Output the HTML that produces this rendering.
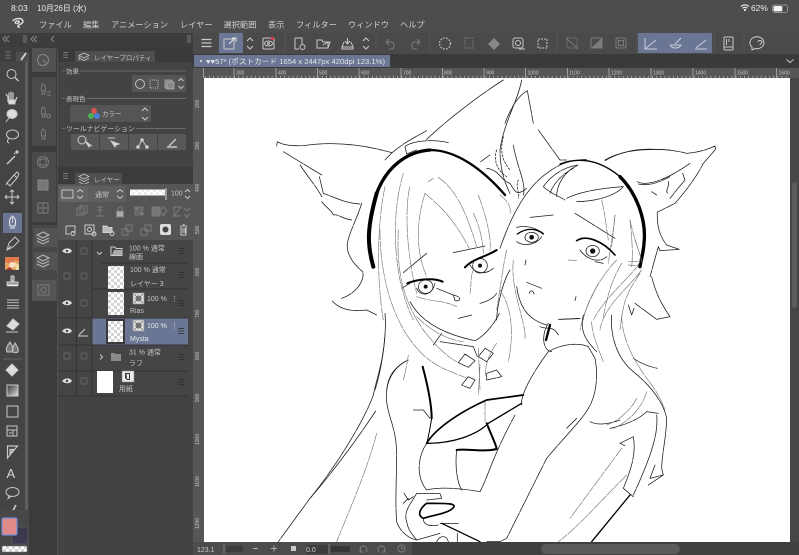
<!DOCTYPE html>
<html lang="ja"><head><meta charset="utf-8"><title>Clip Studio Paint</title>
<style>
html,body{margin:0;padding:0;background:#444;width:799px;height:555px;overflow:hidden}
svg{display:block;filter:blur(.3px)}
text{font-family:"Liberation Sans","Noto Sans CJK JP",sans-serif;fill:#d0d0d0}
.m{font-size:8.2px;fill:#cfcfcf}
.s{font-size:6.5px;fill:#c4c4c4}
.w{font-size:7px;fill:#c4c4c4}
.r{font-size:5px;fill:#c8c8c8}
.i{fill:none;stroke:#c8c8c8;stroke-width:1}
.d{fill:none;stroke:#7c7c7c;stroke-width:1}
.k{fill:none;stroke:#1c1c1c;stroke-width:2.3;stroke-linecap:round;stroke-linejoin:round;stroke-dasharray:70 3 45 2 110 3}
.g{fill:none;stroke:#777;stroke-width:2;stroke-linecap:round;stroke-linejoin:round;stroke-dasharray:30 4 18 3}
.t{fill:none;stroke:#000;stroke-width:7;stroke-linecap:round;stroke-linejoin:round}
</style></head><body>
<svg width="799" height="555" viewBox="0 0 799 555" xmlns="http://www.w3.org/2000/svg">
<defs>
<pattern id="ck" width="6" height="6" patternUnits="userSpaceOnUse"><rect width="6" height="6" fill="#fff"/><rect width="3" height="3" fill="#d4d4d4"/><rect x="3" y="3" width="3" height="3" fill="#d4d4d4"/></pattern>
<pattern id="tk" width="4.18" height="4" patternUnits="userSpaceOnUse"><rect x="0" y="0" width=".8" height="2" fill="#ccc"/></pattern>
<pattern id="tl" width="4" height="4.18" patternUnits="userSpaceOnUse"><rect x="0" y="0" width="2" height=".8" fill="#ccc"/></pattern>
<linearGradient id="gr" x1="0" y1="0" x2="1" y2="1"><stop offset="0" stop-color="#333"/><stop offset="1" stop-color="#ddd"/></linearGradient>
</defs>

<!-- base -->
<rect width="799" height="555" fill="#434343"/>
<rect width="799" height="33" fill="#4d4d4d"/>
<rect y="33" width="193" height="14" fill="#3d3d3d"/>

<!-- status -->
<text x="11" y="11" style="font-size:8.6px;fill:#ececec">8:03</text>
<text x="37" y="11" style="font-size:8px;fill:#ececec">10月26日 (水)</text>
<path d="M741 6.5a6 6 0 0 1 8 0M742.6 8.3a3.5 3.5 0 0 1 4.8 0" fill="none" stroke="#eee" stroke-width="1.1"/><circle cx="745" cy="10" r="1.1" fill="#eee"/>
<text x="751" y="11" style="font-size:8.400px;fill:#ececec">62%</text>
<rect x="772.5" y="5" width="15" height="7.4" rx="2" fill="none" stroke="#aaa" stroke-width=".7"/><rect x="773.5" y="6" width="8.8" height="5.4" rx="1" fill="#f4f4f4"/>

<!-- menu -->
<path d="M13 20.5c3-2.5 8-2.5 9.500-.5 1.500 2.500-1.500 4-3.500 5-1.500.8-1.500 2.200.5 2.200M16 23.500c-1.500-1-.5-2.500 1.500-2.500s2.500 1.500 0 2.500" fill="none" stroke="#ddd" stroke-width="1.500" stroke-linecap="round"/>
<text class="m" x="39" y="27.500">ファイル</text>
<text class="m" x="83" y="27.500">編集</text>
<text class="m" x="111" y="27.500">アニメーション</text>
<text class="m" x="180" y="27.500">レイヤー</text>
<text class="m" x="223.500" y="27.500">選択範囲</text>
<text class="m" x="268" y="27.500">表示</text>
<text class="m" x="296" y="27.500">フィルター</text>
<text class="m" x="348" y="27.500">ウィンドウ</text>
<text class="m" x="400" y="27.500">ヘルプ</text>

<!-- toolbar -->
<rect x="193" y="33" width="606" height="21" fill="#4a4a4a"/>
<rect x="193" y="54" width="606" height="14" fill="#3a3a3a"/>
<rect x="219" y="33" width="24" height="20" fill="#6a7693"/>
<rect x="638" y="33" width="74" height="20" fill="#6a7693"/>
<g class="i">
<path d="M201.500 39.500h10M201.500 43h10M201.500 46.500h10" stroke-width="1.200"/>
<rect x="224" y="39" width="10" height="10"/><path d="M229 44l6-6M232 38h4v4" stroke="#e6e6e6"/>
<path d="M247 41l3-3 3 3M247 46l3 3 3-3"/>
<rect x="263" y="38" width="11" height="11" rx="1"/><ellipse cx="268.500" cy="43.500" rx="4" ry="2.500"/><circle cx="268.500" cy="43.500" r="1"/>
<path d="M295 38h7v6M295 38v11h4"/><circle cx="302.500" cy="47" r="2.500"/>
<path d="M317 40h5l1 2h5v6h-11zM323 45l5-3h2l-2 6"/>
<path d="M342 47h11v2h-11zM347.500 38v6M345 41l2.500 3 2.500-3M344 42l-2 5M351 42l2 5"/>
<path d="M363 41l3-3 3 3M363 46l3 3 3-3"/>
</g>
<circle cx="272.500" cy="38.500" r="1.700" fill="#d23a55"/>
<path d="M285 33v20M376 33v20M430 33v20M557 33v20M637 33v20M714 33v20M744 33v20" stroke="#5a5a5a" stroke-width=".8"/>
<g class="d">
<path d="M386 42h6a4 4 0 0 1 0 7h-3M386 42l3-3M386 42l3 3"/>
<path d="M420 42h-6a4 4 0 0 0 0 7h3M420 42l-3-3M420 42l-3 3"/>
</g>
<circle cx="445" cy="43.500" r="5.500" fill="none" stroke="#c4c4c4" stroke-width="1.300" stroke-dasharray="1.500 1.500"/>
<rect x="465" y="38" width="8" height="10" fill="none" stroke="#7c7c7c" stroke-dasharray="1.500 1"/>
<path d="M488 44l6-6 6 6-6 6z" fill="#888"/>
<rect x="513" y="38" width="10" height="10" rx="2" fill="none" stroke="#c4c4c4"/><circle cx="518" cy="43" r="2.500" fill="none" stroke="#c4c4c4"/><path d="M519 49h6" stroke="#c4c4c4"/>
<rect x="538" y="39" width="9" height="9" fill="none" stroke="#c4c4c4" stroke-dasharray="2 1"/>
<g class="d" stroke="#6e6e6e">
<rect x="567" y="38" width="10" height="10" stroke-dasharray="1.500 1"/><path d="M566 38l12 11"/>
<rect x="591" y="38" width="11" height="10"/>
<rect x="616" y="38" width="10" height="10" rx="1.500"/><rect x="618.500" y="40.500" width="5" height="5"/>
</g>
<path d="M591 48l11-10v10z" fill="#7c7c7c"/>
<g fill="none" stroke="#c9cfdd" stroke-width="1">
<path d="M645 38v11h12M645 49l11-9"/>
<path d="M670 45h11a6 5 0 0 1-11 0M675 44l6-6"/>
<path d="M695 49h12M696 48l10-8"/>
</g>
<g class="i">
<rect x="724" y="37" width="9" height="13" rx="1"/><path d="M724 47h9M726.500 39v6M729 39v3"/>
<path d="M752 47a7 6 0 1 1 3 1.500l-3 1.500zM758 42c0-2 4-2 4 0 0 1.500-2 1.500-2 3"/>
</g>

<!-- doc tab -->
<rect x="194" y="55" width="196" height="12" fill="#6a7693"/>
<circle cx="201" cy="61" r="1.200" fill="#ccc"/>
<text x="206" y="64" textLength="179" lengthAdjust="spacingAndGlyphs" style="font-size:7.400px;fill:#e4e4e4">♥♥57* (ポストカード 1654 x 2447px 420dpi 123.1%)</text>
<path d="M786.500 59.500l3.500 3 3.500-3" fill="none" stroke="#ccc"/>

<!-- rulers -->
<rect x="193" y="68" width="606" height="10" fill="#565656"/>
<rect x="193" y="68" width="11" height="474" fill="#565656"/>
<rect x="204" y="75.500" width="586" height="2" fill="url(#tk)"/>
<rect x="202" y="78" width="2" height="464" fill="url(#tl)"/>
<path d="M203.500 68v10M234 68v10M276 68v10M317.500 68v10M359 68v10M401 68v10M442.500 68v10M484 68v10M525.500 68v10M567.500 68v10M609 68v10M651 68v10M693 68v10M735 68v10M776.500 68v10" stroke="#d0d0d0" stroke-width=".6"/>
<g class="r">
<text class="r" x="236" y="74.500">300</text><text class="r" x="278" y="74.500">400</text><text class="r" x="319" y="74.500">500</text><text class="r" x="361" y="74.500">600</text><text class="r" x="403" y="74.500">700</text><text class="r" x="444" y="74.500">800</text><text class="r" x="486" y="74.500">900</text><text class="r" x="527.500" y="74.500">1000</text><text class="r" x="569" y="74.500">1100</text><text class="r" x="611" y="74.500">1200</text><text class="r" x="653" y="74.500">1300</text><text class="r" x="695" y="74.500">1400</text><text class="r" x="737" y="74.500">1500</text><text class="r" x="778.500" y="74.500">1600</text>
</g>
<g>
<text class="r" transform="translate(199,108) rotate(-90)">200</text><text class="r" transform="translate(199,150) rotate(-90)">300</text><text class="r" transform="translate(199,192) rotate(-90)">400</text><text class="r" transform="translate(199,234) rotate(-90)">500</text><text class="r" transform="translate(199,276) rotate(-90)">600</text><text class="r" transform="translate(199,318) rotate(-90)">700</text><text class="r" transform="translate(199,360) rotate(-90)">800</text><text class="r" transform="translate(199,402) rotate(-90)">900</text><text class="r" transform="translate(199,445) rotate(-90)">1000</text><text class="r" transform="translate(199,487) rotate(-90)">1100</text><text class="r" transform="translate(199,529) rotate(-90)">1200</text>
</g>

<!-- canvas -->
<rect x="204" y="78" width="586" height="464" fill="#fff"/>
<rect x="790" y="78" width="9" height="477" fill="#464646"/>
<rect x="792" y="182" width="5" height="126" rx="2.500" fill="#5c5c5c"/>

<!-- drawing upper (zoom7 space) -->
<g transform="translate(270,80) scale(.33333)">
<g class="k">
<path d="M22 185L20 198M22 185C40 195 60 198 100 197C160 188 250 185 365 218"/>
<path d="M40 215L155 285M90 255C120 300 140 320 155 350"/>
<path d="M148 290L160 340C190 350 225 370 270 372M155 365C170 385 185 390 190 405C205 400 210 415 245 420"/>
<path d="M275 370C260 420 240 450 232 490C228 530 260 560 278 575C285 600 260 640 215 655"/>
<path d="M187 663C210 690 250 695 290 690L320 705"/>
<path d="M470 178C520 130 620 50 700 0"/>
<path d="M345 240C370 210 400 190 470 152M405 200C420 185 480 175 535 188M405 200L410 222L440 210"/>
<path d="M755 0C745 60 700 130 690 210C690 260 700 300 720 340"/>
<path d="M772 32C740 50 720 90 705 130M772 32L790 130M805 150L870 240L890 240"/>
<path d="M632 245L660 225M650 265C690 270 690 300 720 310C735 335 740 350 770 325"/>
<path d="M730 195C740 260 770 310 760 345"/>
<path stroke-dasharray="6 5" d="M700 170C690 210 695 240 720 270M680 210C670 240 680 270 710 290M745 300C735 320 750 340 745 355"/>
<path d="M470 520L400 578M550 518L645 498M395 625L420 610"/>
<path d="M690 505C720 420 760 330 830 280C870 250 900 240 950 238"/>
<path d="M1005 240C1050 212 1120 205 1200 210M1105 312C1140 320 1170 305 1200 290"/>
<path d="M820 320C840 290 880 260 925 255M820 320C840 340 870 350 885 360M890 355C930 335 990 325 1060 320M920 365C980 365 1040 345 1060 320M860 350C860 310 890 270 920 258M840 340C850 310 880 280 910 265"/>
<path d="M780 412L850 405M915 400L1035 475"/>
<path d="M740 442C770 435 800 445 820 460M740 485C760 500 800 495 815 470M930 510C950 540 990 550 1010 530M975 545L1000 550M600 555C610 575 640 590 670 565M440 625C450 650 485 650 495 610"/>
<ellipse cx="785" cy="472" rx="20" ry="15"/><ellipse cx="968" cy="513" rx="20" ry="17"/><ellipse cx="630" cy="557" rx="22" ry="22"/><ellipse cx="467" cy="620" rx="22" ry="20"/>
<path d="M500 625L550 645C575 650 575 665 555 662L550 645"/>
<path d="M768 540L765 555M770 607L815 625M778 640C780 630 790 630 792 642M918 650L915 662"/>
<path d="M720 570C700 600 680 680 680 720M630 670C650 665 670 655 680 640"/>
</g>
<g class="g">
<path d="M400 280C370 380 370 500 390 600C400 640 410 680 430 720M345 320C320 440 320 600 340 720M420 320C410 350 400 480 440 640"/>
<path d="M490 295L475 305M505 292C560 330 590 400 620 500M465 340C440 420 435 510 470 590M465 340C500 370 550 410 600 510M625 345C645 400 665 470 660 510M610 400C630 440 640 490 640 520"/>
<path d="M995 360C1005 400 1010 450 1015 480M1035 405C1030 460 1020 510 1015 550M690 345C710 360 725 380 720 400"/>
<path d="M1040 540C1000 580 950 660 940 720M1110 550C1070 600 1000 660 970 720M1080 420C1085 470 1090 520 1085 560"/>
<path d="M610 570C600 590 605 620 600 640M895 540L920 542M440 650C480 665 520 660 560 680"/>
</g>
<g fill="#111">
<circle cx="785" cy="472" r="7"/><circle cx="968" cy="513" r="8"/><circle cx="630" cy="557" r="6"/><circle cx="467" cy="620" r="6"/>
</g>
<g class="t" stroke-width="6">
<path stroke-width="6" d="M585 562C610 535 650 530 680 510"/>
<path stroke-width="6" d="M412 610C440 598 490 592 518 605"/>
<path stroke-width="5" d="M920 482C950 462 1000 485 1035 525"/>
<path stroke-width="4" d="M742 462C770 442 800 445 820 462"/>
<path stroke-width="12" d="M310 560C290 490 292 440 320 340"/>
<path stroke-width="10" d="M320 340C350 260 410 215 480 210"/>
<path stroke-width="7" d="M480 210C560 210 640 270 705 345"/>
<path stroke-width="4" d="M870 252C930 230 990 240 1050 290"/>
<path stroke-width="10" d="M1050 290C1100 340 1130 420 1122 490C1120 520 1112 545 1110 560"/>
</g>
</g>

<!-- zoom10 space : jaw/neck -->
<g transform="translate(340,230) scale(.33333)">
<g class="k">
<path d="M210 215C240 270 300 310 405 332C430 320 465 280 478 250M355 265L395 255"/>
<path d="M305 310L280 345M300 335L400 350L412 380"/>
<path d="M375 372L405 392L385 412L355 398ZM435 355L460 370L440 395L415 380ZM385 440L405 450L390 475L365 465ZM440 430L470 420L485 440L440 450Z"/>
<path d="M530 170C540 240 570 270 620 285M600 290C620 300 640 285 655 315M625 280C605 310 605 360 635 365M655 268L720 265"/>
<path d="M205 390C170 405 145 440 140 480M135 250C140 300 130 400 105 480"/>
</g>
<g class="g">
<path d="M120 0C120 120 150 280 250 375C300 420 350 430 380 445M175 0C170 100 180 200 250 300C280 340 320 380 350 395M230 260C280 310 330 330 370 335"/>
<path d="M205 375C200 410 195 430 190 450"/>
<path d="M520 90C510 180 560 280 555 325M500 60C490 100 480 180 470 240M480 180C520 240 520 320 505 395M470 340C440 380 430 430 440 440"/>
<path d="M415 355L420 480"/>
</g>
<path class="t" stroke-width="5" d="M630 285L618 330"/>
</g>

<!-- zoom9 space : right ear -->
<g transform="translate(560,130) scale(.33333)">
<g class="k">
<path d="M135 92C180 65 230 55 290 58C330 58 360 65 380 70C410 68 440 60 465 48L467 60"/>
<path d="M232 155C260 170 320 150 390 100M465 60L430 100C410 140 380 180 345 220L295 245"/>
<path d="M368 130L375 150L350 180L330 205M325 155C330 170 315 180 322 190M275 185L290 195"/>
<path d="M292 245C290 290 300 320 320 345L358 358L300 362L295 350M295 350L270 440M275 440C290 500 310 530 330 560L290 568L225 520M205 525L215 555L222 535M0 568L58 566"/>
</g>
<g class="g">
<path d="M245 420C200 480 130 530 120 600M240 430C200 490 190 510 180 600M185 400C150 460 140 510 130 560M165 255L155 350M210 270C220 320 240 370 245 395M225 330L240 375M205 395L240 395L232 408L205 405M115 460C90 510 70 550 60 600"/>
</g>
</g>

<!-- zoom8 space : body -->
<g transform="translate(200,315) scale(.33333)">
<g class="k">
<path d="M555 60C550 140 530 190 520 240C500 300 420 440 330 550L235 680"/>
<path d="M527 288C480 360 400 470 330 550"/>
<path d="M615 140C580 160 555 190 560 260C565 310 590 340 590 420C590 480 585 560 590 620C600 650 625 670 650 675L720 655"/>
<path d="M640 285L670 285L690 310"/>
<path d="M770 405C765 450 770 500 785 525M680 385C650 430 650 490 680 525C720 515 790 520 840 530L845 520C865 480 880 420 945 300"/>
<path d="M650 535C630 570 610 590 620 620C625 650 640 660 650 675M650 535L720 535L725 550L680 555M670 612C670 630 690 635 715 630M720 625L775 625"/>
<path d="M612 535L625 555L640 545M610 565L625 550M710 680C720 660 740 660 745 680M772 655L772 680"/>
<path d="M1045 110C1000 170 960 240 965 270M1045 110C1080 90 1130 80 1165 95L1185 130C1195 180 1190 240 1165 280C1150 310 1090 370 1040 430C1010 490 970 570 920 670L900 680L860 680"/>
<path d="M1130 310L1100 340M1170 320C1190 330 1220 330 1260 315M1230 340C1280 330 1320 310 1340 290L1375 295"/>
<path d="M1235 0C1230 60 1250 130 1300 170C1350 210 1390 260 1400 310C1400 360 1385 420 1385 460L1390 480L1345 510M1300 130C1330 150 1350 155 1372 160"/>
<path d="M1300 365L1260 385L1275 392M1300 365C1310 420 1290 470 1270 520L1300 545M1365 450L1350 490L1390 480"/>
<path d="M1370 300C1375 350 1360 410 1300 540"/>
<path d="M1150 0C1140 40 1150 70 1190 110"/>
</g>
<g class="g">
<path d="M530 355C500 470 450 580 410 680M855 255L855 320M1265 0C1265 60 1290 120 1340 190C1380 240 1395 280 1395 290M1280 480C1200 560 1130 640 1075 680M1265 400L1110 610M1175 20C1175 50 1190 90 1210 140M1340 230C1330 270 1290 320 1240 340M1310 250C1290 290 1250 320 1220 330M840 150L835 240"/>
</g>
<g fill="none" stroke="#000" stroke-linecap="round" stroke-linejoin="round">
<path stroke-width="6" d="M668 155C680 200 695 260 695 310"/>
<path stroke-width="3" d="M695 310C690 340 685 370 680 385"/>
<path stroke-width="5" d="M680 385C700 350 760 300 860 255L970 240"/>
<path stroke-width="4" d="M680 385C760 385 830 360 865 325L965 265"/>
<path stroke-width="6" d="M860 325L885 385L890 400"/>
<path stroke-width="6" d="M770 405C800 400 850 412 890 402"/>
<path stroke-width="5" d="M680 565C660 580 650 600 670 610C700 600 750 595 762 575C765 565 740 565 680 565"/>
<path stroke-width="4" d="M725 625L840 680"/>
<path stroke-width="4" d="M1290 540L1175 680"/>
</g>
</g>

<!-- bottom bar -->
<rect x="193" y="542" width="606" height="13" fill="#404040"/>
<rect x="193" y="542" width="219" height="13" fill="#4c4c4c"/>
<rect x="541" y="544" width="139" height="10" rx="5" fill="#5a5a5a"/>
<text x="197" y="552" style="font-size:7px;fill:#ccc">123.1</text>
<rect x="226" y="546" width="17" height="6" fill="#3c3c3c"/><path d="M224 544v10" stroke="#777"/>
<path d="M253 548.500h5M271 548.500h6M274 545.500v6" stroke="#aaa"/>
<rect x="291" y="546" width="5" height="5" fill="#ccc"/>
<rect x="306" y="545" width="22" height="9" fill="#3d3d3d"/>
<text x="306" y="552" style="font-size:7px;fill:#ccc">0.0</text>
<path d="M329 544v10" stroke="#777"/>
<path d="M331 552v-6h19v6zM331 546c8 0 14 1 19 6" fill="#363636"/>
<g class="d" stroke="#aaa"><path d="M361 552a3.500 3.500 0 1 1 5 0M361 549l-1 3h3"/><path d="M379 552a3.500 3.500 0 1 1 5 0M384 549l1 3h-3"/><circle cx="401.500" cy="548.500" r="3.500"/><path d="M401.500 546.500v2h2"/></g>

<!-- left chrome -->
<g fill="none" stroke="#8a8a8a" stroke-width=".9">
<path d="M6 36l-3 3 3 3M9 36l-3 3 3 3M34 36l-3 3 3 3M37 36l-3 3 3 3M54 36l-3 3 3 3"/>
</g>
<rect x="23" y="35" width="4" height="8" fill="#5c5c5c"/>
<rect x="187" y="35" width="4" height="8" fill="#5c5c5c"/>

<!-- tool column -->
<rect x="0" y="47" width="29" height="508" fill="#444"/>
<rect x="25" y="62" width="3" height="448" fill="#5d5d5d"/>
<rect x="0" y="47" width="29" height="15" fill="#3f3f3f"/>
<rect x="16" y="52" width="13" height="10" fill="#4e4e4e"/>
<path d="M5.500 52h5M5.500 55h5M5.500 58h5" stroke="#8a8a8a" stroke-width=".8"/>
<path d="M21 60l5-7" stroke="#ddd" stroke-width="1.600"/>
<rect x="3" y="213" width="19" height="20" rx="1" fill="#6a7693"/>
<g class="i" stroke="#cfcfcf">
<circle cx="11.500" cy="74" r="4.500"/><path d="M15 77.500l3.500 3.500" stroke-width="1.400"/>
<path d="M8 102v-5l-2-3M9 100v-7.500M11 100v-8.500M13 100v-7.500M15 102l2-5" stroke-width="1.300"/><path d="M8 100h7v4H9z" fill="#e0e0e0"/>
<ellipse cx="12" cy="114" rx="5" ry="4.500" fill="#ddd"/><path d="M9 118l-3 4"/>
<ellipse cx="12.500" cy="134.500" rx="6" ry="4.500"/><path d="M9 138.500c-2 1.500-2 4 0 4.500"/>
<path d="M7 164l8-8" stroke-width="1.500"/><path d="M17 150v4M15 152h4M14 153l1 1" stroke="#eee"/>
<path d="M7 183l7-8 3 3-7 8zM14 175l3-3 2 2-2 4"/><path d="M7 183l-1 2"/>
<path d="M12 190v14M5 197h14M10 192l2-2 2 2M10 202l2 2 2-2M7 195l-2 2 2 2M17 195l2 2-2 2"/>
<path d="M12.500 216c-2 2-3 3-3 6 0 2 .5 3 .5 4h5c0-1 .5-2 .5-4 0-3-1-4-3-6zM10 228h5" stroke="#f0f0f0"/><path d="M12.500 216v7"/>
<path d="M7 250l2-7 6-6 4 4-6 6zM7 250l4-4"/>
<path d="M11 276h3v5h-3zM7 282h11v3H7z" fill="#999"/><path d="M7 285.500h11" stroke="#eee" stroke-width="1.500"/>
<path d="M7 300h12M7 302.700h12M7 305.400h12M7 308h12" stroke-width=".9"/>
<path d="M7 326l6-7 6 5-6 6z" fill="#ddd"/><path d="M6 332h12"/>
<path d="M7 352c-2-4 1-7 3-10 2 3 4 6 2 10zM13 352c-2-2 1-6 2-9 2 3 4 6 3 9-1 1-4 1-5 0z" fill="#777"/>
<path d="M6 370l6-6 6 6-6 6z" fill="#ddd"/>
<rect x="7" y="385" width="11" height="11" fill="url(#gr)" stroke="#ccc"/>
<rect x="7" y="406" width="11" height="11"/>
<rect x="7" y="426" width="10" height="10"/><path d="M7 430h10M13 430v6M9 433h3"/>
<path d="M7.500 446v12l10-12zM10 449.500h3l-3 3.500z" stroke-width="1.200"/>
<ellipse cx="12.500" cy="492" rx="6.500" ry="4.500"/><path d="M9 495.500l-1 3 3-2"/>
<path d="M11 514l5-9" stroke-width="1.700"/><path d="M7 516h5"/>
</g>
<text x="6.500" y="478" style="font-size:13px;fill:#d4d4d4">A</text>
<!-- avatar -->
<rect x="5" y="257" width="14" height="13" fill="#e2a45e"/><path d="M5 257h14v5l-4-2-4 4-6-2z" fill="#e07a4c"/><circle cx="12" cy="265" r="3" fill="#f7e0c8"/><path d="M5 270l5-3 3 3z" fill="#a8382c"/><path d="M14 262l5 3v5h-3z" fill="#f4d9a8"/>
<path d="M3 359h19" stroke="#5e5e5e" stroke-width="1.200"/>
<path d="M3 211h19" stroke="#3a3a3a" stroke-width="1"/>
<!-- colors -->
<rect x="0" y="510" width="29" height="45" fill="#474747"/>
<rect x="12" y="527" width="16" height="17" rx="1" fill="#3b3950" stroke="#5a5a5a" stroke-width=".7"/>
<rect x="2" y="518" width="15" height="17" rx="1.500" fill="#e08a8a" stroke="#6d8ed2" stroke-width="1.200"/>
<rect x="2" y="546" width="25" height="6" rx="1" fill="url(#ck)" stroke="#777" stroke-width=".5"/>

<!-- sub tool column -->
<rect x="29" y="47" width="29" height="508" fill="#3b3b3b"/>
<rect x="32" y="48" width="24" height="24" fill="#525252"/>
<rect x="32" y="77" width="24" height="69" fill="#4a4a4a"/>
<rect x="32" y="152" width="24" height="70" fill="#4a4a4a"/>
<rect x="32" y="225" width="25" height="76" fill="#474747"/>
<rect x="34" y="228" width="23" height="19" fill="#535353"/>
<rect x="34" y="252" width="23" height="18" fill="#535353"/>
<rect x="32" y="280" width="24" height="21" fill="#555"/>
<g class="d">
<circle cx="43" cy="60" r="5.500" stroke="#8a8a8a"/><path d="M43 60l4 4" stroke="#8a8a8a"/>
<path d="M43 84c-2 2-2 5-1 7h3c1-2 1-5-2-7zM42 91h3v3h-3zM47 92h4M47 95h4"/>
<path d="M43 107c-2 2-2 5-1 7h3c1-2 1-5-2-7zM42 114h3v3h-3z"/><circle cx="48.500" cy="116" r="2"/>
<path d="M43 129c-2 2-2 5-1 7h3c1-2 1-5-2-7zM42 136h3v3h-3z"/>
<circle cx="43" cy="162" r="5.500"/><rect x="40" y="159" width="6" height="6"/>
<rect x="38" y="180" width="10" height="10" fill="#777" stroke="#888"/>
<rect x="38" y="203" width="10" height="10"/><path d="M38 208h10M43 203v10"/>
<path d="M43 232l6 3-6 3-6-3zM37 238l6 3 6-3M37 241l6 3 6-3" stroke="#bbb"/>
<path d="M43 255l6 3-6 3-6-3zM37 261l6 3 6-3M37 264l6 3 6-3" stroke="#bbb"/>
<rect x="38" y="285" width="11" height="10"/><circle cx="43.500" cy="290" r="2.500"/>
</g>

<!-- property panel -->
<rect x="58" y="47" width="135" height="120" fill="#434343"/>
<rect x="58" y="167" width="135" height="17" fill="#3b3b3b"/>
<rect x="58" y="47" width="135" height="15" fill="#3a3a3a"/>
<rect x="75" y="51" width="80" height="11" rx="1" fill="#4e4e4e"/>
<path d="M63 52.500h5M63 55h5M63 57.500h5M63 173.500h5M63 176h5M63 178.500h5" stroke="#8a8a8a" stroke-width=".8"/>
<path d="M84 53l5 2.500-5 2.500-5-2.500zM79 58l5 2.500 5-2.500M79 55.500v5" fill="none" stroke="#c8c8c8" stroke-width=".8"/>
<text x="94" y="60" class="s">レイヤープロパティ</text>
<path d="M62 71h3M80 71h106M62 98.500h3M87 98.500h99M62 128.500h3M136 128.500h50" stroke="#6a6a6a" stroke-width=".9"/>
<text x="66" y="73.500" class="s">効果</text>
<text x="66" y="101" class="s">表現色</text>
<text x="66" y="131" class="w" style="font-size:6.900px">ツールナビゲーション</text>
<rect x="132" y="75" width="54" height="17" rx="2" fill="#555"/>
<circle cx="140" cy="84" r="4.500" fill="none" stroke="#c0c0c0"/>
<rect x="150" y="80" width="8" height="8" fill="none" stroke="#bbb" stroke-dasharray="1 1"/>
<rect x="165" y="80" width="7" height="8" fill="#777" stroke="#bbb" stroke-width=".7"/><rect x="167" y="82" width="7" height="7" fill="#888" stroke="#bbb" stroke-width=".7"/>
<path d="M178.500 81l2.500-2.500 2.500 2.500M178.500 86l2.500 2.500 2.500-2.500" class="i"/>
<rect x="70" y="105" width="81" height="17" rx="2" fill="#555"/>
<circle cx="94" cy="111" r="3" fill="#d9534f"/><circle cx="91" cy="116" r="3" fill="#4caf50"/><circle cx="97" cy="116" r="3" fill="#4a7fd8"/>
<text x="102" y="116" class="s">カラー</text>
<path d="M142 111l3-3 3 3M142 117l3 3 3-3" class="i"/>
<rect x="71" y="134" width="28" height="16" rx="1" fill="#585858"/><rect x="100" y="134" width="28" height="16" rx="1" fill="#585858"/><rect x="129" y="134" width="28" height="16" rx="1" fill="#585858"/><rect x="158" y="134" width="28" height="16" rx="1" fill="#585858"/>
<g class="i">
<circle cx="82" cy="140" r="4"/><path d="M85 141l4 6 1-2 2 1z" fill="#ddd"/>
<path d="M108 138h7M111 141l4 6 1-2 3-1z" fill="#ddd"/>
<path d="M138 147l4-7 5 7"/><circle cx="138" cy="147" r="1.300" fill="#ddd"/><circle cx="142" cy="140" r="1.300" fill="#ddd"/><circle cx="147" cy="147" r="1.300" fill="#ddd"/>
<path d="M167 147h10M169 146l7-7" stroke-width="1.400"/>
</g>

<!-- layer panel -->
<rect x="75" y="173" width="47" height="11" fill="#4e4e4e"/>
<path d="M84 174l5 2.500-5 2.500-5-2.500zM79 179l5 2.500 5-2.500M79 182l5 2.500 5-2.500" fill="none" stroke="#c8c8c8" stroke-width=".8"/>
<text x="94" y="182" class="s">レイヤー</text>
<rect x="58" y="184" width="135" height="56" fill="#555"/>
<rect x="59" y="186" width="67" height="16" rx="2" fill="#646464"/>
<rect x="88" y="186" width="38" height="16" fill="#5e5e5e"/>
<rect x="62" y="190" width="11" height="8" fill="none" stroke="#ccc" stroke-width=".9"/>
<path d="M77 192l3-2.500 3 2.500M77 196l3 2.500 3-2.500M117 192l3-2.500 3 2.500M117 196l3 2.500 3-2.500M185 192l2.500-2.500 2.500 2.500M185 196l2.500 2.500 2.500-2.500" class="i"/>
<text x="95" y="197" class="w">通常</text>
<rect x="130" y="189.500" width="35" height="6" fill="url(#ck)"/>
<rect x="130" y="189.500" width="35" height="6" fill="#fff" opacity=".55"/>
<rect x="165" y="188" width="2" height="12" fill="#999"/>
<text x="171" y="195.500" class="w">100</text>
<g class="d" stroke="#9a9a9a">
<rect x="77" y="208" width="7" height="7"/><rect x="80" y="206" width="7" height="7"/>
<path d="M100 207v9M97 207h6M96 216h8M97 210h6"/>
<rect x="116.500" y="211" width="7" height="6" fill="#aaa"/><path d="M118 211v-2a2 2 0 0 1 4 0v2"/>
<rect x="135" y="207" width="3" height="3" fill="#777"/><rect x="140" y="207" width="3" height="3"/><rect x="135" y="212" width="3" height="3"/><rect x="140" y="212" width="3" height="3" fill="#777"/>
<rect x="152" y="207" width="8" height="9" fill="#777"/><path d="M160 211l3-4 4 4-4 4zM163 207l4 4-4 5"/>
<path d="M174 207h7l-7 9zM174 207v9h7M184 208l3 3 3-3M184 214l3 3 3-3"/>
<path d="M66 226h9v6h-3" stroke="#ccc"/><path d="M66 226v8h4" stroke="#ccc"/><circle cx="73" cy="233.500" r="2" stroke="#ccc"/>
<rect x="85" y="225" width="9" height="9" stroke="#ccc"/><circle cx="89.500" cy="229.500" r="2" stroke="#ccc"/><circle cx="94" cy="234" r="2" stroke="#ccc"/>
<path d="M103 226h4l1 1.500h4v5h-9z" fill="#bbb" stroke="#ccc"/><circle cx="112" cy="233.500" r="2" stroke="#ccc"/>
<rect x="122" y="229" width="6" height="6"/><rect x="126" y="225" width="6" height="6"/>
<rect x="141" y="229" width="6" height="6"/><rect x="145" y="225" width="6" height="6"/>
<path d="M180 226h7M181 227v8h5v-8M183 224.500h1.500M183 228v5M185 228v5" stroke="#ccc"/>
</g>
<rect x="160" y="224" width="11" height="11" rx="2" fill="#ddd"/><circle cx="165.500" cy="229.500" r="3" fill="#444"/>

<!-- layer rows -->
<rect x="58" y="240" width="135" height="157" fill="#454545"/>
<rect x="92" y="318" width="96" height="27" fill="#6a7693"/>
<path d="M101 263h87M92 289h96M58 318h130M58 345h130M58 371h130M58 396h130" stroke="#343434" stroke-width=".9"/>
<path d="M76.500 240v156M92 240v156" stroke="#363636" stroke-width=".9"/>
<path d="M57.500 47v508" stroke="#515151"/>
<!-- eyes -->
<g fill="#ddd">
<path d="M62 251c3-3.500 8-3.500 10 0-2 3-7 3-10 0z"/><path d="M62 303c3-3.500 8-3.500 10 0-2 3-7 3-10 0z"/><path d="M62 331c3-3.500 8-3.500 10 0-2 3-7 3-10 0z"/><path d="M62 381c3-3.500 8-3.500 10 0-2 3-7 3-10 0z"/>
</g>
<g fill="#444"><circle cx="67" cy="251" r="1.200"/><circle cx="67" cy="303" r="1.200"/><circle cx="67" cy="331" r="1.200"/><circle cx="67" cy="381" r="1.200"/></g>
<g fill="none" stroke="#666" stroke-width=".9">
<rect x="81" y="248" width="6" height="6" rx="1"/><rect x="64" y="273" width="6" height="6" rx="1"/><rect x="81" y="273" width="6" height="6" rx="1"/><rect x="81" y="300" width="6" height="6" rx="1"/><rect x="64" y="353" width="6" height="6" rx="1"/><rect x="81" y="353" width="6" height="6" rx="1"/><rect x="81" y="378" width="6" height="6" rx="1"/>
</g>
<path d="M78 336h10M79 335l6-6" stroke="#d4d4d4" stroke-width="1" fill="none"/>
<!-- row1 -->
<path d="M97 252l2.500 2.500 2.500-2.500" class="i"/>
<path d="M111 247h4l1 1.500h6v7h-11z" fill="none" stroke="#ccc"/><path d="M112 255l2-5h8.500l-1.500 5z" fill="#aaa"/>
<text x="129" y="250.500" class="w">100 % 通常</text><text x="129" y="259" class="w">線画</text>
<!-- row2 -->
<rect x="108" y="266" width="16" height="23" fill="url(#ck)"/>
<text x="130" y="272" class="w">100 % 通常</text><text x="130" y="286" class="w">レイヤー 3</text>
<!-- row3 -->
<rect x="108" y="292" width="16" height="23" fill="url(#ck)"/>
<rect x="133" y="293" width="11" height="11" fill="#ddd" stroke="#999" stroke-width=".6"/><circle cx="138.500" cy="298.500" r="3" fill="#777"/><path d="M134 294l9 9M143 294l-9 9" stroke="#666" stroke-width=".7"/>
<text x="147" y="301" class="w">100 %</text><text x="171" y="301" class="w">⋮</text>
<text x="130" y="313" class="w">Rias</text>
<!-- row4 -->
<rect x="106" y="319" width="19" height="25" fill="#3a3a3a"/><rect x="108" y="321" width="15" height="21" fill="url(#ck)"/>
<rect x="133" y="320" width="11" height="11" fill="#ddd" stroke="#999" stroke-width=".6"/><circle cx="138.500" cy="325.500" r="3" fill="#777"/><path d="M134 321l9 9M143 321l-9 9" stroke="#666" stroke-width=".7"/>
<text x="147" y="328" class="w" style="fill:#e4e4e4">100 %</text><text x="171" y="328" class="w" style="fill:#e4e4e4">⋮</text>
<text x="130" y="341" class="w" style="fill:#e8e8e8">Mysta</text>
<!-- row5 -->
<path d="M100 354.500l2.500 2.500-2.500 2.500" class="i"/>
<path d="M111 353h3.500l1 1h5.500v7h-10z" fill="#8a8a8a"/>
<text x="129" y="354.500" class="w">31 % 通常</text><text x="129" y="365.500" class="w">ラフ</text>
<!-- row6 -->
<rect x="97" y="371" width="16" height="22" fill="#fff"/>
<rect x="122" y="371" width="12" height="11" fill="#eee" stroke="#888" stroke-width=".6"/><path d="M125 373h5v7h-3l-2-2z" fill="#333"/><path d="M126.500 374h2.500v5h-2z" fill="#eee"/>
<text x="119" y="391" class="w">用紙</text>
<!-- hamburgers -->
<path d="M178 248.500h6M178 251h6M178 253.500h6M178 272.500h6M178 275h6M178 277.500h6M178 300.500h6M178 303h6M178 305.500h6M178 328.500h6M178 331h6M178 333.500h6M178 354.500h6M178 357h6M178 359.500h6M178 379.500h6M178 382h6M178 384.500h6" stroke="#2b2b2b" stroke-width=".8"/>
</svg>
</body></html>
